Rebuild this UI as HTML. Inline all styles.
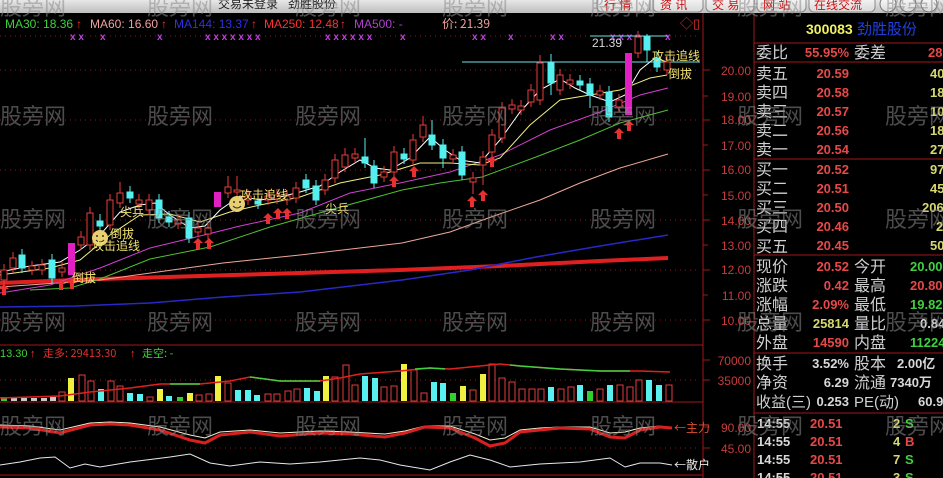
<!DOCTYPE html>
<html><head><meta charset="utf-8">
<style>
html,body{margin:0;padding:0;background:#000;width:943px;height:478px;overflow:hidden}
svg{display:block}
text{font-family:"Liberation Sans","Noto Sans CJK SC",sans-serif}
.cn{font-family:"Noto Sans CJK SC","WenQuanYi Zen Hei",sans-serif}
.wm{fill:#8a8a8a;fill-opacity:.55;font-size:22px;font-family:"Noto Sans CJK SC",sans-serif}
</style></head><body>
<svg width="943" height="478" viewBox="0 0 943 478" xmlns="http://www.w3.org/2000/svg">
<defs>
<linearGradient id="tb" x1="0" y1="0" x2="0" y2="1"><stop offset="0" stop-color="#e8e8e8"/><stop offset="1" stop-color="#bdbdbd"/></linearGradient>
<linearGradient id="bt" x1="0" y1="0" x2="0" y2="1"><stop offset="0" stop-color="#ffffff"/><stop offset="1" stop-color="#d8d8d8"/></linearGradient>
</defs>
<rect width="943" height="478" fill="#000"/>
<rect x="0" y="0" width="943" height="13" fill="url(#tb)"/>
<text x="218" y="8" font-size="12" fill="#222" class="cn">交易未登录</text>
<text x="288" y="8" font-size="12" fill="#222" class="cn">劲胜股份</text>
<g font-size="12" fill="#cc1010" class="cn">
<rect x="597" y="-6" width="53" height="18" rx="5" fill="url(#bt)" stroke="#888"/><text x="604" y="9">行 情</text>
<rect x="653" y="-6" width="50" height="18" rx="5" fill="url(#bt)" stroke="#888"/><text x="660" y="9">资 讯</text>
<rect x="706" y="-6" width="48" height="18" rx="5" fill="url(#bt)" stroke="#888"/><text x="712" y="9">交 易</text>
<rect x="757" y="-6" width="49" height="18" rx="5" fill="url(#bt)" stroke="#888"/><text x="763" y="9">网 站</text>
<rect x="809" y="-6" width="66" height="18" rx="5" fill="url(#bt)" stroke="#888"/><text x="814" y="9">在线交流</text>
</g>
<circle cx="888" cy="4" r="8" fill="url(#bt)" stroke="#777"/>
<circle cx="908" cy="4" r="8" fill="url(#bt)" stroke="#777"/>
<circle cx="929" cy="4" r="8" fill="url(#bt)" stroke="#777"/>

<g stroke="#a01818" stroke-width="1">
<line x1="703" y1="13" x2="703" y2="478"/>
<line x1="754" y1="13" x2="754" y2="478"/>
<line x1="0" y1="345" x2="703" y2="345"/>
<line x1="0" y1="402" x2="703" y2="402"/>
<line x1="0" y1="475" x2="703" y2="475"/>
<line x1="754" y1="43" x2="943" y2="43"/>
<line x1="754" y1="62" x2="943" y2="62"/>
<line x1="754" y1="159" x2="943" y2="159"/>
<line x1="754" y1="255" x2="943" y2="255"/>
<line x1="754" y1="353" x2="943" y2="353"/>
<line x1="754" y1="413" x2="943" y2="413"/>
</g>
<g stroke="#8a1a1a" stroke-width="1" stroke-dasharray="1,4">
<line x1="0" y1="36" x2="700" y2="36"/>
<line x1="0" y1="70" x2="700" y2="70"/>
<line x1="0" y1="120" x2="700" y2="120"/>
<line x1="0" y1="170" x2="700" y2="170"/>
<line x1="0" y1="220" x2="700" y2="220"/>
<line x1="0" y1="270" x2="700" y2="270"/>
<line x1="0" y1="320" x2="700" y2="320"/>
<line x1="0" y1="380" x2="700" y2="380"/>
<line x1="0" y1="448" x2="700" y2="448"/>
</g>
<g stroke="#a01818">
<line x1="703" y1="70" x2="710" y2="70"/><line x1="703" y1="96" x2="708" y2="96"/><line x1="703" y1="120" x2="710" y2="120"/><line x1="703" y1="145" x2="708" y2="145"/><line x1="703" y1="170" x2="710" y2="170"/><line x1="703" y1="195" x2="708" y2="195"/><line x1="703" y1="220" x2="710" y2="220"/><line x1="703" y1="245" x2="708" y2="245"/><line x1="703" y1="270" x2="710" y2="270"/><line x1="703" y1="295" x2="708" y2="295"/><line x1="703" y1="320" x2="710" y2="320"/><line x1="703" y1="360" x2="710" y2="360"/><line x1="703" y1="380" x2="710" y2="380"/><line x1="703" y1="427" x2="710" y2="427"/><line x1="703" y1="448" x2="710" y2="448"/>
</g>
<g font-size="12" fill="#c83c3c" text-anchor="end">
<text x="751" y="75">20.00</text><text x="751" y="101">19.00</text><text x="751" y="124">18.00</text><text x="751" y="150">17.00</text><text x="751" y="174">16.00</text><text x="751" y="200">15.00</text><text x="751" y="225">14.00</text><text x="751" y="250">13.00</text><text x="751" y="274">12.00</text><text x="751" y="300">11.00</text><text x="751" y="325">10.00</text>
<text x="751" y="365">70000</text><text x="751" y="385">35000</text><text x="751" y="432">90.00</text><text x="751" y="453">45.00</text>
</g>

<g font-size="12">
<text x="5" y="28" fill="#3cd23c">MA30: 18.36</text><text x="76" y="28" fill="#ff3030">↑</text>
<text x="90" y="28" fill="#f0a0a0">MA60: 16.60</text><text x="161" y="28" fill="#ff3030">↑</text>
<text x="174" y="28" fill="#3030e0">MA144: 13.37</text><text x="251" y="28" fill="#ff3030">↑</text>
<text x="264" y="28" fill="#ff3030">MA250: 12.48</text><text x="340" y="28" fill="#ff3030">↑</text>
<text x="354" y="28" fill="#b040d0">MA500: -</text>
<text x="442" y="28" fill="#f0a0a0" class="cn">价: 21.39</text>
<text x="680" y="28" fill="#e03030" font-size="13">◇▯</text>
</g>
<g fill="#c040e0" font-size="10" font-weight="bold">
<text x="70" y="40">x x</text><text x="100" y="40">x</text><text x="157" y="40">x</text><text x="205" y="40">x x x x x x x</text><text x="325" y="40">x x x x x x</text><text x="400" y="40">x</text><text x="472" y="40">x x</text><text x="508" y="40">x</text><text x="550" y="40">x x</text><text x="610" y="40">x x x x</text><text x="665" y="40">x</text>
</g>
<line x1="590" y1="36" x2="668" y2="36" stroke="#70e0e8"/>
<line x1="462" y1="62" x2="700" y2="62" stroke="#70e0e8"/>
<text x="592" y="47" font-size="12" fill="#d8d8d8">21.39</text>

<g fill="none">
<polyline stroke="#e02020" stroke-width="4" points="0,283 100,279 200,276 300,273 400,270 500,266 600,261 668,258"/>
<polyline stroke="#2828c8" stroke-width="1.5" points="0,307 76,306 150,303 223,297 300,292 402,280 470,270 536,257 600,246 668,235"/>
<polyline stroke="#f0a898" stroke-width="1" points="0,287 100,280 223,263 300,255 402,243 450,232 491,217 540,200 580,183 620,168 668,154"/>
<polyline stroke="#50c030" stroke-width="1" points="30,290 70,288 100,279 150,259 210,247 270,227 330,210 402,190 440,183 482,177 536,157 580,140 620,123 668,110"/>
<polyline stroke="#d040d0" stroke-width="1" points="0,293 50,285 100,268 150,248 200,236 240,226 300,213 350,193 400,183 450,172 500,155 550,130 600,112 640,95 668,88"/>
<polyline stroke="#f0f080" stroke-width="1" points="0,275 50,268 80,260 110,235 140,215 170,214 200,222 230,212 260,205 300,197 340,183 380,175 420,163 450,163 480,165 500,158 530,125 560,100 590,95 620,90 650,78 667,75"/>
<polyline stroke="#ffffff" stroke-width="1" points="0,272 30,266 60,262 80,250 100,235 120,212 140,205 155,203 170,215 190,228 205,226 220,210 240,196 260,200 280,197 300,192 320,186 340,172 360,160 375,168 390,170 410,158 430,137 445,150 460,160 480,163 500,140 520,112 540,90 560,79 575,88 590,95 610,102 625,95 640,70 655,58 667,62"/>
</g>

<g stroke-width="1">
<g stroke="#e83c3c" fill="#000">
<line x1="4" y1="264" x2="4" y2="285"/><rect x="1" y="270" width="6" height="10"/>
<line x1="13" y1="252" x2="13" y2="273"/><rect x="10" y="258" width="6" height="10"/>
<line x1="32" y1="261" x2="32" y2="275"/><rect x="29" y="266" width="6" height="4"/>
<line x1="42" y1="259" x2="42" y2="275"/><rect x="39" y="265" width="6" height="5"/>
<line x1="62" y1="262" x2="62" y2="277"/><rect x="59" y="268" width="6" height="4"/>
<line x1="81" y1="231" x2="81" y2="250"/><rect x="78" y="237" width="6" height="8"/>
<line x1="90" y1="207" x2="90" y2="250"/><rect x="87" y="213" width="6" height="32"/>
<line x1="110" y1="194" x2="110" y2="230"/><rect x="107" y="200" width="6" height="25"/>
<line x1="120" y1="182" x2="120" y2="208"/><rect x="117" y="193" width="6" height="10"/>
<line x1="139" y1="194" x2="139" y2="209"/><rect x="136" y="200" width="6" height="4"/>
<line x1="149" y1="194" x2="149" y2="215"/><rect x="146" y="200" width="6" height="10"/>
<line x1="178" y1="214" x2="178" y2="229"/><rect x="175" y="220" width="6" height="4"/>
<line x1="198" y1="222" x2="198" y2="237"/><rect x="195" y="228" width="6" height="4"/>
<line x1="208" y1="222" x2="208" y2="239"/><rect x="205" y="228" width="6" height="6"/>
<line x1="228" y1="176" x2="228" y2="198"/><rect x="225" y="187" width="6" height="6"/>
<line x1="237" y1="176" x2="237" y2="197"/><rect x="234" y="190" width="6" height="2"/>
<line x1="248" y1="190" x2="248" y2="205"/><rect x="245" y="196" width="6" height="4"/>
<line x1="268" y1="190" x2="268" y2="205"/><rect x="265" y="196" width="6" height="4"/>
<line x1="277" y1="189" x2="277" y2="204"/><rect x="274" y="195" width="6" height="4"/>
<line x1="287" y1="190" x2="287" y2="205"/><rect x="284" y="196" width="6" height="4"/>
<line x1="296" y1="182" x2="296" y2="203"/><rect x="293" y="188" width="6" height="10"/>
<line x1="325" y1="174" x2="325" y2="195"/><rect x="322" y="180" width="6" height="10"/>
<line x1="335" y1="154" x2="335" y2="183"/><rect x="332" y="160" width="6" height="18"/>
<line x1="345" y1="148" x2="345" y2="172"/><rect x="342" y="155" width="6" height="12"/>
<line x1="355" y1="148" x2="355" y2="163"/><rect x="352" y="154" width="6" height="4"/>
<line x1="384" y1="166" x2="384" y2="182"/><rect x="381" y="172" width="6" height="5"/>
<line x1="394" y1="146" x2="394" y2="177"/><rect x="391" y="152" width="6" height="20"/>
<line x1="413" y1="134" x2="413" y2="165"/><rect x="410" y="140" width="6" height="20"/>
<line x1="423" y1="116" x2="423" y2="142"/><rect x="420" y="125" width="6" height="12"/>
<line x1="453" y1="149" x2="453" y2="164"/><rect x="450" y="155" width="6" height="4"/>
<line x1="473" y1="172" x2="473" y2="194"/><rect x="470" y="178" width="6" height="4"/>
<line x1="483" y1="151" x2="483" y2="185"/><rect x="480" y="157" width="6" height="8"/>
<line x1="492" y1="129" x2="492" y2="157"/><rect x="489" y="135" width="6" height="17"/>
<line x1="502" y1="102" x2="502" y2="143"/><rect x="499" y="108" width="6" height="30"/>
<line x1="512" y1="99" x2="512" y2="114"/><rect x="509" y="105" width="6" height="4"/>
<line x1="521" y1="100" x2="521" y2="115"/><rect x="518" y="106" width="6" height="4"/>
<line x1="531" y1="84" x2="531" y2="107"/><rect x="528" y="90" width="6" height="12"/>
<line x1="540" y1="55" x2="540" y2="105"/><rect x="537" y="63" width="6" height="37"/>
<line x1="560" y1="69" x2="560" y2="95"/><rect x="557" y="75" width="6" height="15"/>
<line x1="570" y1="74" x2="570" y2="89"/><rect x="567" y="80" width="6" height="4"/>
<line x1="600" y1="85" x2="600" y2="100"/><rect x="597" y="91" width="6" height="4"/>
<line x1="619" y1="94" x2="619" y2="112"/><rect x="616" y="100" width="6" height="7"/>
<line x1="638" y1="31" x2="638" y2="58"/><rect x="635" y="37" width="6" height="16"/>
<line x1="667" y1="56" x2="667" y2="75"/><rect x="664" y="62" width="6" height="8"/>
</g>
<g stroke="#54f0f0" fill="#54f0f0">
<line x1="22" y1="249" x2="22" y2="273"/><rect x="19" y="255" width="6" height="13"/>
<line x1="52" y1="254" x2="52" y2="283"/><rect x="49" y="260" width="6" height="18"/>
<line x1="100" y1="214" x2="100" y2="232"/><rect x="97" y="221" width="6" height="5"/>
<line x1="130" y1="186" x2="130" y2="203"/><rect x="127" y="192" width="6" height="6"/>
<line x1="159" y1="194" x2="159" y2="223"/><rect x="156" y="200" width="6" height="18"/>
<line x1="169" y1="211" x2="169" y2="227"/><rect x="166" y="217" width="6" height="5"/>
<line x1="189" y1="212" x2="189" y2="243"/><rect x="186" y="218" width="6" height="20"/>
<line x1="258" y1="195" x2="258" y2="209"/><rect x="255" y="201" width="6" height="3"/>
<line x1="306" y1="174" x2="306" y2="193"/><rect x="303" y="180" width="6" height="8"/>
<line x1="316" y1="180" x2="316" y2="205"/><rect x="313" y="186" width="6" height="14"/>
<line x1="365" y1="138" x2="365" y2="168"/><rect x="362" y="157" width="6" height="6"/>
<line x1="374" y1="160" x2="374" y2="188"/><rect x="371" y="166" width="6" height="17"/>
<line x1="404" y1="148" x2="404" y2="164"/><rect x="401" y="154" width="6" height="5"/>
<line x1="432" y1="120" x2="432" y2="150"/><rect x="429" y="135" width="6" height="10"/>
<line x1="443" y1="139" x2="443" y2="168"/><rect x="440" y="145" width="6" height="13"/>
<line x1="462" y1="146" x2="462" y2="180"/><rect x="459" y="152" width="6" height="23"/>
<line x1="551" y1="54" x2="551" y2="95"/><rect x="548" y="63" width="6" height="20"/>
<line x1="580" y1="75" x2="580" y2="90"/><rect x="577" y="81" width="6" height="4"/>
<line x1="590" y1="78" x2="590" y2="108"/><rect x="587" y="84" width="6" height="11"/>
<line x1="609" y1="86" x2="609" y2="122"/><rect x="606" y="92" width="6" height="25"/>
<line x1="647" y1="34" x2="647" y2="62"/><rect x="644" y="37" width="6" height="13"/>
<line x1="657" y1="52" x2="657" y2="72"/><rect x="654" y="58" width="6" height="9"/>
</g>
<g fill="#e020c0">
<rect x="68" y="243" width="7" height="32"/><rect x="214" y="192" width="7" height="15"/><rect x="625" y="53" width="7" height="62"/>
</g>
</g>

<g fill="#e83030">
<path d="M0,0 l5,5 h-3 v6 h-4 v-6 h-3 z" transform="translate(4,284)"/>
<path d="M0,0 l5,5 h-3 v6 h-4 v-6 h-3 z" transform="translate(61,279)"/>
<path d="M0,0 l5,5 h-3 v6 h-4 v-6 h-3 z" transform="translate(72,278)"/>
<path d="M0,0 l5,5 h-3 v6 h-4 v-6 h-3 z" transform="translate(198,238)"/>
<path d="M0,0 l5,5 h-3 v6 h-4 v-6 h-3 z" transform="translate(209,238)"/>
<path d="M0,0 l5,5 h-3 v6 h-4 v-6 h-3 z" transform="translate(268,213)"/>
<path d="M0,0 l5,5 h-3 v6 h-4 v-6 h-3 z" transform="translate(278,208)"/>
<path d="M0,0 l5,5 h-3 v6 h-4 v-6 h-3 z" transform="translate(287,208)"/>
<path d="M0,0 l5,5 h-3 v6 h-4 v-6 h-3 z" transform="translate(394,176)"/>
<path d="M0,0 l5,5 h-3 v6 h-4 v-6 h-3 z" transform="translate(414,166)"/>
<path d="M0,0 l5,5 h-3 v6 h-4 v-6 h-3 z" transform="translate(472,196)"/>
<path d="M0,0 l5,5 h-3 v6 h-4 v-6 h-3 z" transform="translate(483,190)"/>
<path d="M0,0 l5,5 h-3 v6 h-4 v-6 h-3 z" transform="translate(492,156)"/>
<path d="M0,0 l5,5 h-3 v6 h-4 v-6 h-3 z" transform="translate(619,128)"/>
<path d="M0,0 l5,5 h-3 v6 h-4 v-6 h-3 z" transform="translate(629,120)"/>
</g>
<g>
<circle cx="100" cy="238" r="8" fill="#e8d070"/><circle cx="97" cy="236" r="1" fill="#333"/><circle cx="103" cy="236" r="1" fill="#333"/><path d="M96,240 q4,4 8,0" stroke="#333" fill="none"/>
<circle cx="237" cy="204" r="8" fill="#e8d070"/><circle cx="234" cy="202" r="1" fill="#333"/><circle cx="240" cy="202" r="1" fill="#333"/><path d="M233,206 q4,4 8,0" stroke="#333" fill="none"/>
</g>
<g font-size="12" fill="#f0e070" class="cn">
<text x="110" y="238">倒拔</text><text x="92" y="250">攻击追线</text>
<text x="72" y="282">倒拔</text>
<text x="120" y="216">尖兵</text>
<text x="240" y="199">攻击追线</text>
<text x="325" y="213">尖兵</text>
<text x="652" y="60">攻击追线</text>
<text x="668" y="78">倒拔</text>
</g>

<text x="0" y="357" font-size="11" fill="#3cd23c">13.30</text><text x="30" y="357" font-size="11" fill="#ff3030">↑</text>
<text x="43" y="357" font-size="11" fill="#e03030" class="cn">走多: 29413.30</text><text x="130" y="357" font-size="11" fill="#ff3030">↑</text>
<text x="142" y="357" font-size="11" fill="#3cd23c" class="cn">走空: -</text>
<g stroke-width="1">
<g fill="#000" stroke="#e03c3c">
<rect x="59" y="392" width="6" height="9"/><rect x="79" y="375" width="6" height="26"/><rect x="88" y="381" width="6" height="20"/><rect x="108" y="381" width="6" height="20"/><rect x="117" y="386" width="6" height="15"/><rect x="147" y="397" width="6" height="4"/><rect x="196" y="395" width="6" height="6"/><rect x="206" y="394" width="6" height="7"/><rect x="225" y="383" width="6" height="18"/><rect x="265" y="394" width="6" height="7"/><rect x="274" y="394" width="6" height="7"/><rect x="285" y="391" width="6" height="10"/><rect x="294" y="389" width="6" height="12"/><rect x="332" y="377" width="6" height="24"/><rect x="343" y="365" width="6" height="36"/><rect x="352" y="385" width="6" height="16"/><rect x="381" y="387" width="6" height="14"/><rect x="391" y="386" width="6" height="15"/><rect x="411" y="370" width="6" height="31"/><rect x="421" y="393" width="6" height="8"/><rect x="470" y="390" width="6" height="11"/><rect x="489" y="364" width="6" height="37"/><rect x="499" y="378" width="6" height="23"/><rect x="509" y="382" width="6" height="19"/><rect x="519" y="389" width="6" height="12"/><rect x="529" y="389" width="6" height="12"/><rect x="538" y="389" width="6" height="12"/><rect x="558" y="389" width="6" height="12"/><rect x="568" y="387" width="6" height="14"/><rect x="597" y="389" width="6" height="12"/><rect x="617" y="385" width="6" height="16"/><rect x="627" y="387" width="6" height="14"/><rect x="636" y="380" width="6" height="21"/><rect x="666" y="385" width="6" height="16"/>
</g>
<g fill="#58f0f0"><rect x="98" y="389" width="6" height="12"/><rect x="127" y="393" width="6" height="8"/><rect x="137" y="394" width="6" height="7"/><rect x="166" y="396" width="6" height="5"/><rect x="235" y="390" width="6" height="11"/><rect x="245" y="390" width="6" height="11"/><rect x="254" y="395" width="6" height="6"/><rect x="304" y="388" width="6" height="13"/><rect x="314" y="391" width="6" height="10"/><rect x="362" y="376" width="6" height="25"/><rect x="372" y="378" width="6" height="23"/><rect x="431" y="382" width="6" height="19"/><rect x="440" y="383" width="6" height="18"/><rect x="548" y="387" width="6" height="14"/><rect x="577" y="385" width="6" height="16"/><rect x="607" y="385" width="6" height="16"/><rect x="646" y="380" width="6" height="21"/><rect x="656" y="385" width="6" height="16"/></g>
<g fill="#f0f040"><rect x="68" y="378" width="6" height="23"/><rect x="157" y="389" width="6" height="12"/><rect x="187" y="393" width="6" height="8"/><rect x="215" y="376" width="6" height="25"/><rect x="323" y="376" width="6" height="25"/><rect x="401" y="364" width="6" height="37"/><rect x="460" y="386" width="6" height="15"/><rect x="480" y="374" width="6" height="27"/></g>
<g fill="#30d030"><rect x="1" y="397" width="6" height="4"/><rect x="177" y="397" width="6" height="4"/><rect x="450" y="393" width="6" height="8"/><rect x="587" y="391" width="6" height="10"/></g>
<g fill="#c8c8c8"><rect x="11" y="398" width="6" height="3"/><rect x="21" y="398" width="6" height="3"/><rect x="31" y="398" width="6" height="3"/><rect x="41" y="398" width="6" height="3"/><rect x="50" y="397" width="6" height="4"/></g>
</g>
<polyline fill="none" stroke="#e02020" stroke-width="1.5" points="0,398 60,396 90,392 130,388 160,384 200,384 230,381 250,377 280,381 320,381 340,378 360,374 400,371 430,368 450,369 480,366 500,364 520,366 560,369 600,371 640,371 670,372"/>
<g fill="none" stroke="#40d040" stroke-width="1.5">
<polyline points="170,384 200,384"/><polyline points="250,377 280,381 320,381"/><polyline points="415,369 430,368 445,369"/><polyline points="510,365 520,366 560,369 600,371 630,371"/>
</g>

<polyline fill="none" stroke="#f0f0d0" stroke-width="1" points="0,425 30,426 60,430 90,423 110,422 130,423 160,427 190,435 205,438 220,432 250,430 280,433 320,431 350,432 385,434 405,431 425,426 450,426 475,434 490,440 505,438 520,430 540,428 560,427 590,427 610,433 625,432 640,428 660,426 672,428"/>
<polyline fill="none" stroke="#d82020" stroke-width="3" points="0,427 30,428 60,433 90,425 110,424 130,425 160,430 190,440 205,443 220,435 250,432 280,436 320,433 350,434 385,437 405,433 425,427 450,428 475,438 490,446 505,443 520,432 540,430 560,428 590,429 610,437 625,438 640,430 660,427 672,428"/>
<polyline fill="none" stroke="#e8e8e8" stroke-width="1" points="0,465 20,462 40,458 55,457 70,468 85,464 100,467 130,462 170,457 190,454 210,463 230,466 260,462 290,464 320,462 360,458 380,460 400,465 430,470 450,462 470,455 490,460 510,467 540,464 580,462 610,458 625,467 640,463 660,463 672,465"/>
<text x="674" y="432" font-size="12" fill="#e05030" class="cn">←主力</text>
<text x="674" y="469" font-size="12" fill="#e8e8e8" class="cn">←散户</text>

<text x="806" y="34" font-size="14" font-weight="bold" fill="#f0f060">300083</text>
<text x="857" y="34" font-size="15" fill="#2040e0" class="cn">劲胜股份</text>
<g font-size="16" fill="#d0d0d0" class="cn">
<text x="756" y="58">委比</text><text x="854" y="58">委差</text>
<text x="756" y="79">卖五</text><text x="756" y="98">卖四</text><text x="756" y="117">卖三</text><text x="756" y="136">卖二</text><text x="756" y="155">卖一</text>
<text x="756" y="175">买一</text><text x="756" y="194">买二</text><text x="756" y="213">买三</text><text x="756" y="232">买四</text><text x="756" y="252">买五</text>
<text x="756" y="272">现价</text><text x="854" y="272">今开</text>
<text x="756" y="291">涨跌</text><text x="854" y="291">最高</text>
<text x="756" y="310">涨幅</text><text x="854" y="310">最低</text>
<text x="756" y="329">总量</text><text x="854" y="329">量比</text>
<text x="756" y="348">外盘</text><text x="854" y="348">内盘</text>
<text x="756" y="369">换手</text><text x="854" y="369">股本</text>
<text x="756" y="388">净资</text><text x="854" y="388">流通</text>
<text x="756" y="407" font-size="15">收益(三)</text><text x="854" y="407" font-size="15">PE(动)</text>
</g>
<g font-size="13" font-weight="bold" text-anchor="end" fill="#e84848">
<text x="849" y="57">55.95%</text>
<text x="849" y="78">20.59</text><text x="849" y="97">20.58</text><text x="849" y="116">20.57</text><text x="849" y="135">20.56</text><text x="849" y="154">20.54</text>
<text x="849" y="174">20.52</text><text x="849" y="193">20.51</text><text x="849" y="212">20.50</text><text x="849" y="231">20.46</text><text x="849" y="250">20.45</text>
<text x="849" y="271">20.52</text><text x="849" y="290">0.42</text><text x="849" y="309">2.09%</text><text x="849" y="328" fill="#d8d870">25814</text><text x="849" y="347">14590</text>
<text x="849" y="368" fill="#d8d8d8">3.52%</text><text x="849" y="387" fill="#d8d8d8">6.29</text><text x="849" y="406" fill="#d8d8d8">0.253</text>
</g>
<g font-size="13" font-weight="bold" fill="#d8d870">
<text x="928" y="57" fill="#e84848">287</text>
<text x="930" y="78">40</text><text x="930" y="97">18</text><text x="930" y="116">10</text><text x="930" y="135">18</text><text x="930" y="154">27</text>
<text x="930" y="174">97</text><text x="930" y="193">45</text><text x="922" y="212">206</text><text x="936" y="231">2</text><text x="930" y="250">50</text>
<text x="910" y="271" fill="#40d040">20.00</text><text x="910" y="290" fill="#e84848">20.80</text><text x="910" y="309" fill="#40d040">19.82</text><text x="920" y="328" fill="#d8d8d8">0.84</text><text x="910" y="347" fill="#40d040">11224</text>
<text x="897" y="368" fill="#d8d8d8">2.00亿</text><text x="890" y="387" fill="#d8d8d8">7340万</text><text x="918" y="406" fill="#d8d8d8">60.9</text>
</g>
<g font-size="13" font-weight="bold">
<text x="757" y="428" fill="#d8d8d8">14:55</text><text x="810" y="428" fill="#e84848">20.51</text><text x="893" y="428" fill="#d8d870">2</text><text x="905" y="428" fill="#40d040">S</text>
<text x="757" y="446" fill="#d8d8d8">14:55</text><text x="810" y="446" fill="#e84848">20.51</text><text x="893" y="446" fill="#d8d870">4</text><text x="905" y="446" fill="#e84848">B</text>
<text x="757" y="464" fill="#d8d8d8">14:55</text><text x="810" y="464" fill="#e84848">20.51</text><text x="893" y="464" fill="#d8d870">7</text><text x="905" y="464" fill="#40d040">S</text>
<text x="757" y="482" fill="#d8d8d8">14:55</text><text x="810" y="482" fill="#e84848">20.51</text><text x="893" y="482" fill="#d8d870">3</text><text x="905" y="482" fill="#40d040">S</text>
</g>

<g class="wm">
<text x="0" y="15">股旁网</text><text x="147" y="15">股旁网</text><text x="295" y="15">股旁网</text><text x="442" y="15">股旁网</text><text x="590" y="15">股旁网</text><text x="737" y="15">股旁网</text><text x="885" y="15">股旁网</text>
<text x="0" y="124">股旁网</text><text x="147" y="124">股旁网</text><text x="295" y="124">股旁网</text><text x="442" y="124">股旁网</text><text x="590" y="124">股旁网</text><text x="737" y="124">股旁网</text><text x="885" y="124">股旁网</text>
<text x="0" y="227">股旁网</text><text x="147" y="227">股旁网</text><text x="295" y="227">股旁网</text><text x="442" y="227">股旁网</text><text x="590" y="227">股旁网</text><text x="737" y="227">股旁网</text><text x="885" y="227">股旁网</text>
<text x="0" y="330">股旁网</text><text x="147" y="330">股旁网</text><text x="295" y="330">股旁网</text><text x="442" y="330">股旁网</text><text x="590" y="330">股旁网</text><text x="737" y="330">股旁网</text><text x="885" y="330">股旁网</text>
<text x="0" y="434">股旁网</text><text x="147" y="434">股旁网</text><text x="295" y="434">股旁网</text><text x="442" y="434">股旁网</text><text x="590" y="434">股旁网</text><text x="737" y="434">股旁网</text><text x="885" y="434">股旁网</text>
</g>
</svg>
</body></html>
